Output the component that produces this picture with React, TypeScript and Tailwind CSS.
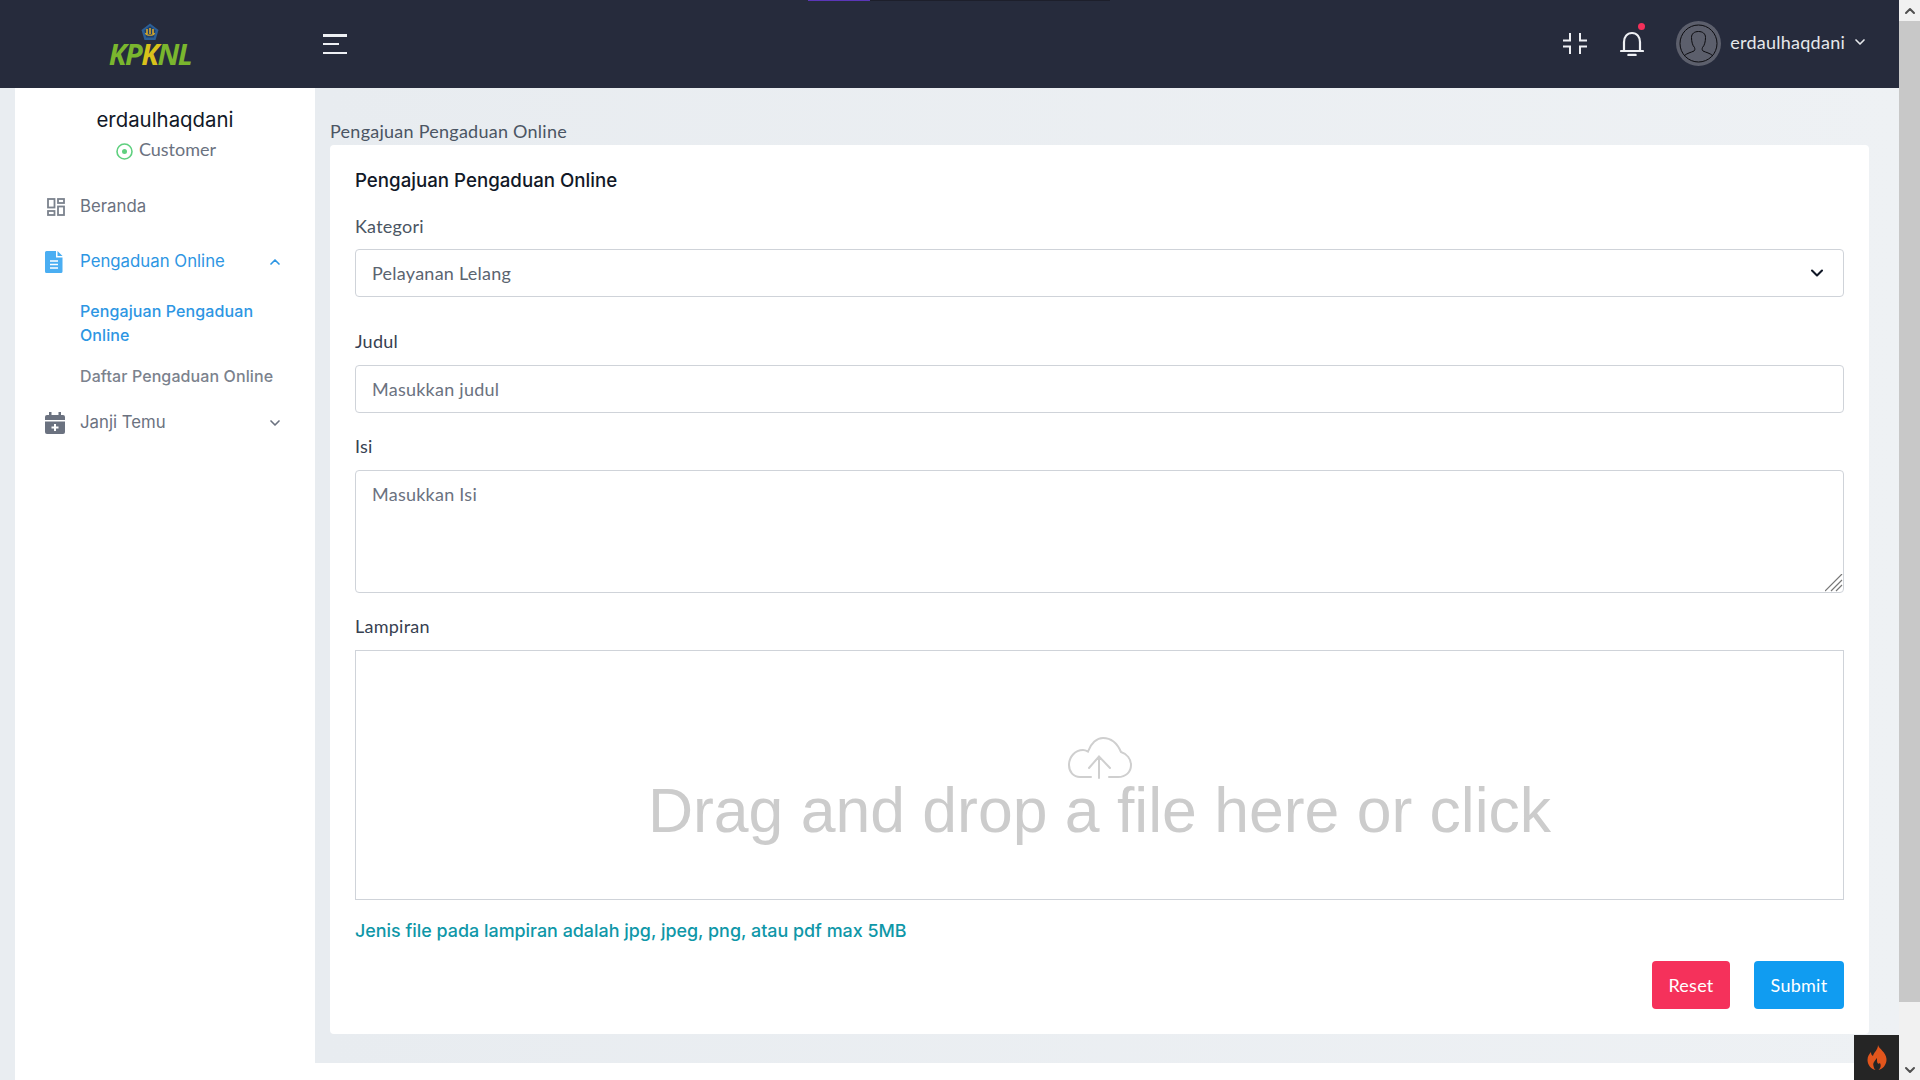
import { ChevronDown, ChevronUp } from "lucide-react";

const nunito = "font-['Lato','Noto_Sans',sans-serif] tracking-[0.25px]";

const Label = ({ text, dark }: { text: string; dark?: boolean }) => (
  <label className={`block text-[18px] leading-[24px] ${dark ? "text-[#374151]" : "text-[#4b5563]"} ${nunito}`}>{text}</label>
);

const Emblem = () => (
  <svg width="18" height="18" viewBox="0 0 18 18">
    <path d="M9 0.5 17.5 7 14.5 17H3.5L0.5 7Z" fill="#2c5e94" />
    <path d="M9 3 14.6 7.4 12.8 14.6H5.2L3.4 7.4Z" fill="#1f3f6a" />
    <path d="M6 6v5M9 5v6M12 6v5" stroke="#d8a92a" strokeWidth="1.6" />
    <path d="M4.5 10c1 3 8 3 9 0" stroke="#d8a92a" strokeWidth="1.2" fill="none" />
  </svg>
);

const Logo = () => (
  <div className="flex flex-col items-center">
    <Emblem />
    <div className="font-['Open_Sans',sans-serif] text-[29px] leading-[26px] font-bold italic tracking-[-1.5px] text-[#7ab62e]">
      KP<span className="text-[#d9c21b]">K</span>NL
    </div>
  </div>
);

const Avatar = () => (
  <svg width="45" height="45" viewBox="0 0 45 45">
    <circle cx="22.5" cy="22.5" r="22.5" fill="#5c5f6c" />
    <circle cx="22.5" cy="22.5" r="18.5" fill="none" stroke="#0b0b0f" strokeWidth="1" />
    <path
      d="M8 35c3-3 7-3.500 10-5 1-1 1-2 .5-3.500-2-2-3-6-3-10 0-4 3-6 7-6s7 2 7 6c0 4-1 8-3 10-.5 1.500-.5 2.500.5 3.500 3 1.500 7 2 10 5"
      fill="none"
      stroke="#0b0b0f"
      strokeWidth="1"
    />
  </svg>
);

const Header = () => (
  <header className="relative flex h-[88px] shrink-0 items-center bg-[#262b3c]">
    <div className="absolute top-0 left-[808px] h-[1px] w-[302px] bg-[#1d1f2b]">
      <div className="h-[1px] w-[62px] bg-[#5b36b8]" />
    </div>
    <div className="flex w-[300px] justify-center pt-[2px]">
      <Logo />
    </div>
    <div className="ml-[23px] flex h-[20px] w-[24px] flex-col justify-between">
      <span className="h-[2.500px] w-[24px] bg-[#eef0f4]" />
      <span className="h-[2.500px] w-[16px] bg-[#eef0f4]" />
      <span className="h-[2.500px] w-[24px] bg-[#eef0f4]" />
    </div>
    <div className="ml-auto flex items-center pr-[31px] pb-[2px]">
      <svg width="24" height="21" viewBox="0 0 24 21" fill="none" stroke="#eef0f4" strokeWidth="2">
        <path d="M7 0V7.500H0M17 0V7.500H24M7 21V13.500H0M17 21V13.500H24" />
      </svg>
      <div className="relative ml-[33px]">
        <svg width="24" height="26" viewBox="0 0 24 26" fill="none" stroke="#eef0f4" strokeWidth="2.200" strokeLinecap="round">
          <path d="M1 21H23M4 21V12C4 7 7 3 12 3s8 4 8 9v9" />
          <path d="M8.500 25H15.500" strokeWidth="2.500" />
        </svg>
        <span className="absolute top-[-7px] right-[-1px] h-[7px] w-[7px] rounded-full bg-[#f4305a]" />
      </div>
      <div className="ml-[32px]">
        <Avatar />
      </div>
      <span className={`mb-[2px] ml-[9px] text-[18px] text-[#e5e7eb] ${nunito}`}>erdaulhaqdani</span>
      <ChevronDown className="mb-[2px] ml-[7px] text-[#e5e7eb]" size={16} strokeWidth={2.5} />
    </div>
  </header>
);

const Sidebar = () => (
  <aside className="ml-[15px] flex w-[300px] shrink-0 flex-col bg-white pt-[20px]">
    <div className="text-center font-['Inter',sans-serif] text-[20.400px] leading-[24px] text-[#111827]">erdaulhaqdani</div>
    <div className="mt-[5px] flex items-center justify-center gap-[6px] pl-[2px] font-['Lato',sans-serif] text-[18px] leading-[24px] text-[#6b7280]">
      <svg width="17" height="17" viewBox="0 0 17 17" className="mt-[5px]">
        <circle cx="8.500" cy="8.500" r="7.500" fill="none" stroke="#5fd07f" strokeWidth="1.600" />
        <circle cx="8.500" cy="8.500" r="2.500" fill="#5fd07f" />
      </svg>
      Customer
    </div>
    <nav className="mt-[34px] font-['Inter',sans-serif] text-[#6b7280]">
      <div className="flex h-[24px] items-center pl-[32px] text-[16.800px]">
        <svg width="18" height="18" viewBox="0 0 18 18" fill="none" stroke="#7b828d" strokeWidth="1.800">
          <rect x="1" y="1" width="6.500" height="8.500" />
          <rect x="11" y="1" width="6" height="4" />
          <rect x="1" y="13" width="6.500" height="4" />
          <rect x="11" y="8.500" width="6" height="8.500" />
        </svg>
        <span className="ml-[15px]">Beranda</span>
      </div>
      <div className="mt-[31px] flex h-[24px] items-center pl-[30px] pr-[32px] text-[16.800px] text-[#2d96e3]">
        <svg width="18" height="22" viewBox="0 0 18 22" className="shrink-0">
          <path d="M1.500 0H11V6.500H17.500V20.500a1.500 1.500 0 0 1-1.500 1.500H1.500A1.500 1.500 0 0 1 0 20.500V1.500A1.500 1.500 0 0 1 1.500 0Z" fill="#4aaef2" />
          <path d="M12.500 0 17.500 5H12.500Z" fill="#4aaef2" />
          <path d="M5 10H13M5 13.500H13M5 17H13" stroke="#fff" strokeWidth="1.300" />
        </svg>
        <span className="ml-[17px]">Pengaduan Online</span>
        <ChevronUp className="ml-auto" size={16} strokeWidth={2.5} />
      </div>
      <div className="mt-[25px] pl-[65px] pr-[30px] text-[16px] leading-[24px] font-medium tracking-[0.1px] text-[#2d96e3]">
        Pengajuan Pengaduan Online
      </div>
      <div className="mt-[17px] pl-[65px] text-[16px] leading-[24px] font-medium tracking-[0.1px] text-[#7b828d]">Daftar Pengaduan Online</div>
      <div className="mt-[23px] flex h-[24px] items-center pl-[30px] pr-[32px] text-[16.800px]">
        <svg width="20" height="22" viewBox="0 0 20 22" className="shrink-0">
          <path d="M4 0h2.500v3H13.500V0H16v3h2a2 2 0 0 1 2 2v3H0V5a2 2 0 0 1 2-2h2Z" fill="#6b7280" />
          <path d="M0 9.500H20V20a2 2 0 0 1-2 2H2a2 2 0 0 1-2-2Z" fill="#6b7280" />
          <path d="M10 12v7M6.500 15.500H13.500" stroke="#fff" strokeWidth="2" />
        </svg>
        <span className="ml-[15px]">Janji Temu</span>
        <ChevronDown className="ml-auto" size={16} strokeWidth={2.5} />
      </div>
    </nav>
  </aside>
);

const inputClass = `block w-full rounded-[4px] border border-[#cfd3d9] bg-white px-[16px] text-[18px] text-[#5b6470] placeholder:text-[#6b7280] outline-none ${nunito}`;

const CloudUpload = () => (
  <svg width="64" height="42" viewBox="0 0 64 42" fill="none" stroke="#cfcfcf" strokeWidth="2" strokeLinecap="round">
    <path d="M23 40H12C5.500 40 1 35 1 28C1 20 7 13 15 13C17 13 19 14 20 14.500C23 6 29 1 35 1C44 1 50 8 53 15C59 17 63 22 63 28C63 35 58 40 50 40H41" />
    <path d="M31 41V19.500M21 31 31 19.500 42 31" />
  </svg>
);

const Form = () => (
  <div className="rounded-[4px] bg-white px-[25px] pt-[22px] pb-[25px]">
    <h2 className="font-['Inter',sans-serif] text-[18.700px] leading-[27px] font-medium text-[#111827]">Pengajuan Pengaduan Online</h2>
    <div className="mt-[20px]">
      <Label text="Kategori" />
    </div>
    <div className={`${inputClass} mt-[11px] flex h-[48px] items-center justify-between pr-[16px]`}>
      Pelayanan Lelang
      <ChevronDown className="text-[#111827]" size={20} strokeWidth={2.5} />
    </div>
    <div className="mt-[32px]">
      <Label text="Judul" dark />
    </div>
    <input className={`${inputClass} mt-[12px] h-[48px]`} placeholder="Masukkan judul" />
    <div className="mt-[21px]">
      <Label text="Isi" dark />
    </div>
    <div className="relative mt-[12px]">
      <textarea className={`${inputClass} h-[123px] resize-none pt-[10px]`} placeholder="Masukkan Isi" />
      <svg width="18" height="18" viewBox="0 0 18 18" className="absolute right-[1px] bottom-[1px]" stroke="#777" strokeWidth="1.200">
        <path d="M0 17 17 0M6 17 17 6M11 17 17 11" />
      </svg>
    </div>
    <div className="mt-[21px]">
      <Label text="Lampiran" dark />
    </div>
    <div className="mt-[12px] flex h-[250px] flex-col items-center justify-center border border-[#cfd3d9] pt-[32px]">
      <CloudUpload />
      <p className="mt-[-4px] font-['Liberation_Sans',sans-serif] text-[62.500px] leading-[70px] text-[#cccccc]">Drag and drop a file here or click</p>
    </div>
    <p className="mt-[19px] font-['Inter',sans-serif] text-[17.900px] leading-[24px] font-medium text-[#0f97a8]">
      Jenis file pada lampiran adalah jpg, jpeg, png, atau pdf max 5MB
    </p>
    <div className={`mt-[18px] flex justify-end gap-[24px] text-[18px] text-white ${nunito}`}>
      <button className="h-[48px] w-[78px] rounded-[4px] bg-[#f5315b]">Reset</button>
      <button className="h-[48px] w-[90px] rounded-[4px] bg-[#109cf1]">Submit</button>
    </div>
  </div>
);

const Scrollbar = () => (
  <div className="flex w-[21px] shrink-0 flex-col bg-[#f1f1f1]">
    <div className="flex h-[21px] items-center justify-center">
      <ChevronUp className="text-[#505050]" size={16} strokeWidth={3} />
    </div>
    <div className="h-[981px] bg-[#c8c8c8]" />
    <div className="mt-auto flex h-[21px] items-center justify-center">
      <ChevronDown className="text-[#505050]" size={16} strokeWidth={3} />
    </div>
  </div>
);

const App = () => {
  return (
    <div className="relative flex h-screen w-full overflow-hidden bg-[#e9edf1]">
      <div className="flex min-w-0 flex-1 flex-col">
        <Header />
        <div className="flex min-h-0 flex-1">
          <Sidebar />
          <main className="flex min-w-0 flex-1 flex-col bg-linear-to-r from-[#e8ecf0] to-[#eef1f4]">
            <div className="flex-1 pt-[30px] pr-[30px] pl-[15px]">
              <div className={`text-[18px] leading-[27px] text-[#4b5563] ${nunito}`}>Pengajuan Pengaduan Online</div>
              <Form />
            </div>
            <div className="h-[17px] bg-white" />
          </main>
        </div>
      </div>
      <Scrollbar />
      <div className="absolute right-[21px] bottom-0 flex h-[45px] w-[45px] items-center justify-center bg-[#252525]">
        <svg width="20" height="25" viewBox="0 0 20 25">
          <path
            d="M11 0c1 4 8 7 8.500 14 .3 6-4 10-8 11 2-2 3-4 1.500-7-1 1-2 1-2.500 0-1-2 0-4-1-5-1 3-4 4-3 8 .3 2 1 3 2 4C4 24 .5 20 .5 15c0-4 2-6 3.500-8 0 2 .5 3 2 4C7 7 11 5 11 0Z"
            fill="#e2551c"
          />
        </svg>
      </div>
    </div>
  );
};

export default App;
